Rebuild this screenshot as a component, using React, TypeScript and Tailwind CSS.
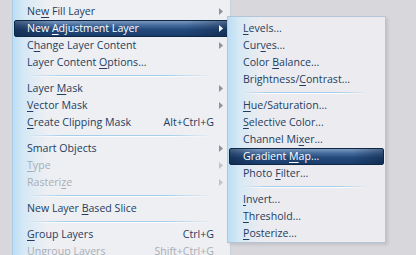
import React from "react";

type Item =
  | { sep: true }
  | {
      sep?: false;
      label: string;
      shortcut?: string;
      arrow?: boolean;
      disabled?: boolean;
      active?: boolean;
    };

const mainItems: Item[] = [
  { label: "Ne&w Fill Layer", arrow: true },
  { label: "New &Adjustment Layer", arrow: true, active: true },
  { label: "C&hange Layer Content", arrow: true },
  { label: "Layer Content &Options..." },
  { sep: true },
  { label: "Layer &Mask", arrow: true },
  { label: "&Vector Mask", arrow: true },
  { label: "&Create Clipping Mask", shortcut: "Alt+Ctrl+G" },
  { sep: true },
  { label: "Smart Objects", arrow: true },
  { label: "&Type", arrow: true, disabled: true },
  { label: "Rasteri&ze", arrow: true, disabled: true },
  { sep: true },
  { label: "New Layer &Based Slice" },
  { sep: true },
  { label: "&Group Layers", shortcut: "Ctrl+G" },
  { label: "&Ungroup Layers", shortcut: "Shift+Ctrl+G", disabled: true },
];

const subItems: Item[] = [
  { label: "&Levels..." },
  { label: "Cur&ves..." },
  { label: "Color &Balance..." },
  { label: "Brightness/&Contrast..." },
  { sep: true },
  { label: "&Hue/Saturation..." },
  { label: "&Selective Color..." },
  { label: "Channel Mi&xer..." },
  { label: "Gradient &Map...", active: true },
  { label: "Photo &Filter..." },
  { sep: true },
  { label: "&Invert..." },
  { label: "&Threshold..." },
  { label: "&Posterize..." },
];

// "&" marks the mnemonic letter
const Label = ({ text }: { text: string }) => {
  const i = text.indexOf("&");
  if (i < 0) return <>{text}</>;
  return (
    <>
      {text.slice(0, i)}
      <span className="underline underline-offset-[2px] decoration-1">{text[i + 1]}</span>
      {text.slice(i + 2)}
    </>
  );
};

const Arrow = ({ color }: { color: string }) => (
  <svg width="4" height="7" viewBox="0 0 4 7" className="block">
    <path d="M0 0 L4 3.5 L0 7 Z" fill={color} />
  </svg>
);

const Row = ({ item, pl }: { item: Item; pl: string }) => {
  if (item.sep) {
    return (
      <div className={`h-[9px] pt-[4px] ${pl} pr-[16px]`}>
        <div className="h-px bg-[linear-gradient(to_right,rgba(160,205,235,0),#a2cdeb_20%,#a2cdeb_75%,rgba(160,205,235,0))]" />
        <div className="h-px bg-[linear-gradient(to_right,rgba(255,255,255,0),#ffffff_20%,#ffffff_75%,rgba(255,255,255,0))]" />
      </div>
    );
  }
  const textColor = item.active
    ? "text-white"
    : item.disabled
    ? "text-[#a8aeb6]"
    : "text-[#243d5e]";
  const arrowColor = item.active ? "#ffffff" : item.disabled ? "#c0c4ca" : "#8c939c";
  return (
    <div
      className={`flex h-[17px] items-center ${pl} pr-[5px] ${textColor} ${
        item.active
          ? "rounded-[2px] border border-[#0d2747] bg-[linear-gradient(to_right,rgba(8,24,50,0.45),rgba(8,24,50,0)_18%,rgba(8,24,50,0)_80%,rgba(8,24,50,0.4)),linear-gradient(to_bottom,#7b98be_0%,#43699a_30%,#23497b_58%,#1a3c6a_100%)]"
          : "border border-transparent"
      }`}
    >
      <span className="flex-1 whitespace-nowrap">
        <Label text={item.label} />
      </span>
      {item.shortcut && <span className="whitespace-nowrap">{item.shortcut}</span>}
      <span className="flex w-[9px] justify-end">{item.arrow && <Arrow color={arrowColor} />}</span>
    </div>
  );
};

export default function App() {
  return (
    <div className="relative h-[255px] w-[416px] overflow-hidden bg-[#d7d7dc] font-['Open_Sans',sans-serif] text-[10.6px] leading-none">
      {/* main menu */}
      <div className="ml-[12px] w-[219px] border-x border-l-[#a7cbe3] border-r-[#c9d2dc] bg-[linear-gradient(to_right,#bddef4_0px,#d7e9f5_12px,#eeeff3_34px)] px-px pt-[3px] pb-[20px]">
        {mainItems.map((item, i) => (
          <Row key={i} item={item} pl="pl-[12px]" />
        ))}
      </div>

      {/* submenu */}
      <div className="absolute left-[227px] top-[16px] w-[159px] border border-[#b3c5d7] border-l-[#a7cbe3] bg-[linear-gradient(to_right,#bddef4_0px,#d7e9f5_12px,#ececf0_34px)] px-px pt-[3px] pb-0 shadow-[2px_2px_3px_rgba(0,0,0,0.1)]">
        {subItems.map((item, i) => (
          <Row key={i} item={item} pl="pl-[13px]" />
        ))}
      </div>
    </div>
  );
}
